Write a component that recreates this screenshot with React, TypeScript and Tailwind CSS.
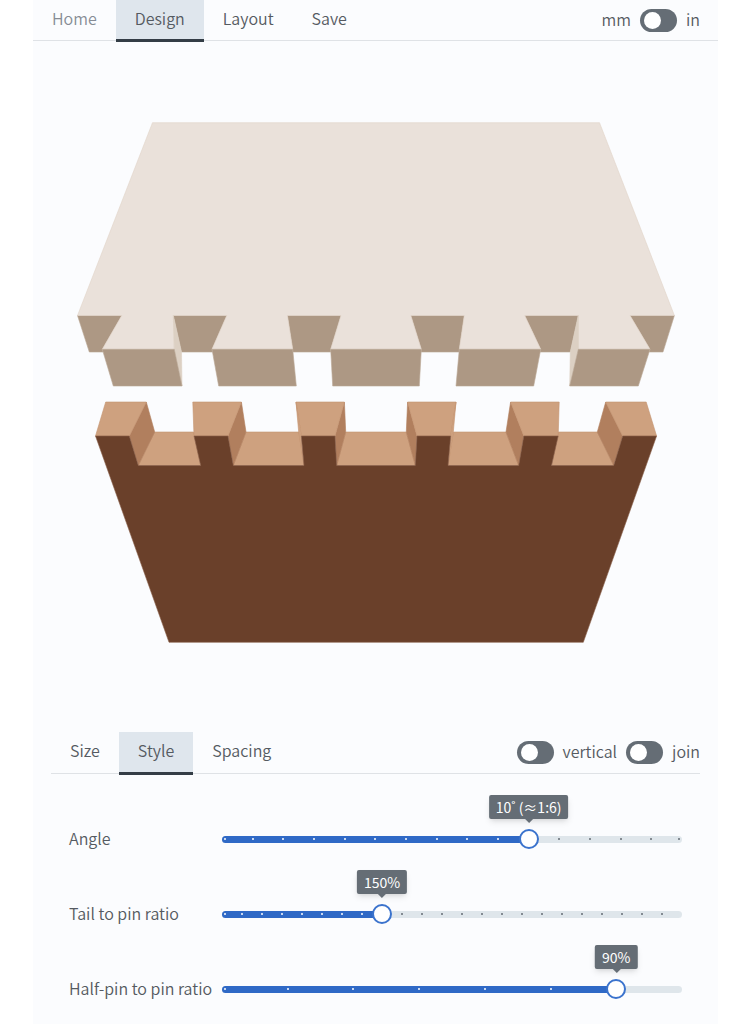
import { useState } from "react";

const TAIL_ENDS = [
  "102.3,349.3 174.3,349.3 182,386 113.3,386",
  "212,349.3 292.7,349.3 296.3,386 218.7,386",
  "330.7,349.3 421.3,349.3 419.3,386 332.7,386",
  "459.3,349.3 540.7,349.3 533.7,386 456,386",
  "578.3,349.3 650,349.3 638.3,386 569.7,386",
];

const TAIL_SOCKETS = [
  "77.5,315.5 121.8,315.5 102.3,349.3 103,352 89.3,352",
  "173.3,315.5 226.8,315.5 212,349.3 212.5,352 181.5,352",
  "287.4,315.5 341,315.5 330.7,349.3 330.8,352 293,352 292.7,349.3",
  "410.8,315.5 464.3,315.5 459.3,349.3 459,352 421.2,352 421.3,349.3",
  "524.7,315.5 578.3,315.5 570.3,352 540.2,352 540.7,349.3",
  "630,315.5 674.4,315.5 663,352 649.3,352 650,349.3",
];

const TAIL_SIDES = [
  "173.3,315.5 181.5,352 182,386 174.3,349.3",
  "578.3,315.5 578.3,349.3 569.7,386 570.3,352",
];

const PIN_FLOORS = [
  "154.7,432 193.7,432 200.7,465.5 138.3,465.5",
  "246,432 299,432 304,465.5 233.3,465.5",
  "345.7,432 406.3,432 415.3,465.5 336.7,465.5",
  "453.3,432 506,432 518.7,465.5 448,465.5",
  "558.3,432 597.3,432 613.7,465.5 551.5,465.5",
];

const PIN_TOPS = [
  "105.7,402 146.3,402 129.3,436 95.5,436",
  "192.8,402 241.4,402 228,436 194,436",
  "296,402 344.4,402 335,436 301.3,436",
  "407.6,402 456,402 450.7,436 417,436",
  "510.6,402 559.2,402 558.2,436 523.8,436",
  "605.7,402 646.2,402 656.6,436 622.7,436",
  "296,402 301.3,436 304,465.5 298.7,432",
  "456,402 450.7,436 448,465.5 453.3,432",
];

const PIN_SIDES = [
  "146.3,402 154.7,432 138.3,465.5 129.3,436",
  "241.4,402 246,432 233.3,465.5 228,436",
  "344.4,402 345.7,432 336.7,465.5 335,436",
  "407.6,402 406.3,432 415.3,465.5 417,436",
  "510.6,402 506,432 518.7,465.5 523.8,436",
  "605.7,402 597.3,432 613.7,465.5 622.7,436",
];

function Faces({ faces, fill, stroke }: { faces: string[]; fill: string; stroke: string }) {
  return (
    <g fill={fill} stroke={stroke} strokeWidth="0.6">
      {faces.map((points) => (
        <polygon key={points} points={points} />
      ))}
    </g>
  );
}

function Joint() {
  return (
    <svg viewBox="33 41 685 691" className="block w-full" role="img" aria-label="Dovetail joint">
      {/* Tail board */}
      <Faces faces={TAIL_SOCKETS} fill="#ad9884" stroke="#baa896" />
      <Faces
        faces={[
          "152.5,122.7 599.5,122.7 674.4,315.5 630,315.5 650,349.3 578.3,349.3 578.3,315.5 524.7,315.5 540.7,349.3 459.3,349.3 464.3,315.5 410.8,315.5 421.3,349.3 330.7,349.3 341,315.5 287.4,315.5 292.7,349.3 212,349.3 226.8,315.5 173.3,315.5 174.3,349.3 102.3,349.3 121.8,315.5 77.5,315.5",
        ]}
        fill="#eae1da"
        stroke="#e0d3c8"
      />
      <Faces faces={TAIL_SIDES} fill="#dcd0c3" stroke="#dcd0c3" />
      <Faces faces={TAIL_ENDS} fill="#ad9884" stroke="#baa896" />

      {/* Pin board */}
      <Faces faces={PIN_FLOORS} fill="#cea17f" stroke="#c49470" />
      <Faces faces={PIN_SIDES} fill="#b17f5e" stroke="#b17f5e" />
      <Faces faces={PIN_TOPS} fill="#cea17f" stroke="#c49470" />
      <Faces
        faces={[
          "95.5,436 129.3,436 138.3,465.5 200.7,465.5 194,436 228,436 233.3,465.5 304,465.5 301.3,436 335,436 336.7,465.5 415.3,465.5 417,436 450.7,436 448,465.5 518.7,465.5 523.8,436 558.2,436 551.5,465.5 613.7,465.5 622.7,436 656.6,436 583.3,642.3 169,642.3",
        ]}
        fill="#6a402a"
        stroke="#8a6049"
      />
    </svg>
  );
}

function Tab({ label, active, muted }: { label: string; active?: boolean; muted?: boolean }) {
  return (
    <button
      type="button"
      className={
        "relative z-10 -mb-[2px] border-b-[3px] px-[19px] pb-1 " +
        (active ? "border-[#343d46] bg-[#dfe6ed] " : "border-transparent ") +
        (muted ? "text-[#868c95]" : "text-[#555a61]")
      }
    >
      {label}
    </button>
  );
}

function Switch({ id }: { id: string }) {
  return (
    <input
      id={id}
      type="checkbox"
      role="switch"
      className="h-[23px] w-[37px] shrink-0 appearance-none rounded-full bg-[#656d75] px-1 py-[3px] before:block before:size-[17px] before:rounded-full before:bg-white checked:bg-[#2f69c6] checked:before:ml-3"
    />
  );
}

type SliderProps = {
  id: string;
  label: string;
  steps: number;
  initial: number;
  lastTick: number;
  format: (step: number) => string;
};

function Slider({ id, label, steps, initial, lastTick, format }: SliderProps) {
  const [step, setStep] = useState(initial);
  const percent = (step / steps) * 100;

  return (
    <div className="flex h-6 items-center">
      <label htmlFor={id} className="w-[153px] shrink-0 pb-[2px] whitespace-nowrap">
        {label}
      </label>
      <div className="relative h-[7px] flex-1 rounded-full bg-[#dfe6eb]">
        <div className="h-full rounded-full bg-[#2f69c6]" style={{ width: `${percent}%` }} />
        {Array.from({ length: lastTick + 1 }).map((_, i) => (
          <span
            key={i}
            className={
              "absolute top-1/2 size-[2px] -translate-x-1/2 -translate-y-1/2 rounded-full " +
              (i < step ? "bg-white" : "bg-[#656d75]")
            }
            style={{ left: `clamp(3px, ${(i / steps) * 100}%, calc(100% - 3px))` }}
          />
        ))}
        <input
          id={id}
          type="range"
          min={0}
          max={steps}
          value={step}
          onChange={(e) => setStep(Number(e.target.value))}
          className="absolute -top-[7px] -left-[10px] h-5 w-[calc(100%+20px)] appearance-none bg-transparent [&::-webkit-slider-thumb]:size-5 [&::-webkit-slider-thumb]:appearance-none [&::-webkit-slider-thumb]:rounded-full [&::-webkit-slider-thumb]:border-2 [&::-webkit-slider-thumb]:border-[#3b73cd] [&::-webkit-slider-thumb]:bg-white"
        />
        <output
          htmlFor={id}
          className="absolute bottom-6 h-6 -translate-x-1/2 rounded-xs bg-[#656d75] px-[7px] text-sm leading-6 font-normal whitespace-nowrap text-white shadow-md after:absolute after:top-full after:left-1/2 after:-translate-x-1/2 after:border-4 after:border-b-0 after:border-transparent after:border-t-[#656d75]"
          style={{ left: `${percent}%` }}
        >
          {format(step)}
        </output>
      </div>
    </div>
  );
}

export default function App() {
  return (
    <div className="min-h-screen bg-white pr-[15px] pl-[33px]">
      <div className="min-h-screen bg-[#fbfcfe] font-['Noto_Sans_CJK_JP','Noto_Sans',sans-serif] text-base leading-6 font-[350] text-[#555a61]">
        <header className="flex h-[41px] justify-between border-b border-[#dfe2e6]">
          <nav className="flex">
            <Tab label="Home" muted />
            <Tab label="Design" active />
            <Tab label="Layout" />
            <Tab label="Save" />
          </nav>
          <div className="flex items-center gap-[9px] pr-[18px]">
            <label htmlFor="unit" className="pb-[3px]">mm</label>
            <Switch id="unit" />
            <label htmlFor="unit" className="pb-[3px]">in</label>
          </div>
        </header>

        <Joint />

        <div className="mx-[18px] flex h-[42px] justify-between border-b border-[#dfe2e6]">
          <nav className="flex">
            <Tab label="Size" />
            <Tab label="Style" active />
            <Tab label="Spacing" />
          </nav>
          <div className="flex items-center gap-[9px]">
            <Switch id="vertical" />
            <label htmlFor="vertical" className="pb-[3px]">vertical</label>
            <Switch id="join" />
            <label htmlFor="join" className="pb-[3px]">join</label>
          </div>
        </div>

        <div className="flex flex-col gap-[51px] px-9 pt-[53px] pb-6">
          <Slider
            id="angle"
            label="Angle"
            steps={15}
            initial={10}
            lastTick={15}
            format={(n) => `${n}˚ (≈1:${n ? Math.round(1 / Math.tan((n * Math.PI) / 180)) : "∞"})`}
          />
          <Slider
            id="tail-ratio"
            label="Tail to pin ratio"
            steps={23}
            initial={8}
            lastTick={22}
            format={(n) => `${70 + n * 10}%`}
          />
          <Slider
            id="half-pin-ratio"
            label="Half-pin to pin ratio"
            steps={7}
            initial={6}
            lastTick={6}
            format={(n) => `${30 + n * 10}%`}
          />
        </div>
      </div>
    </div>
  );
}
